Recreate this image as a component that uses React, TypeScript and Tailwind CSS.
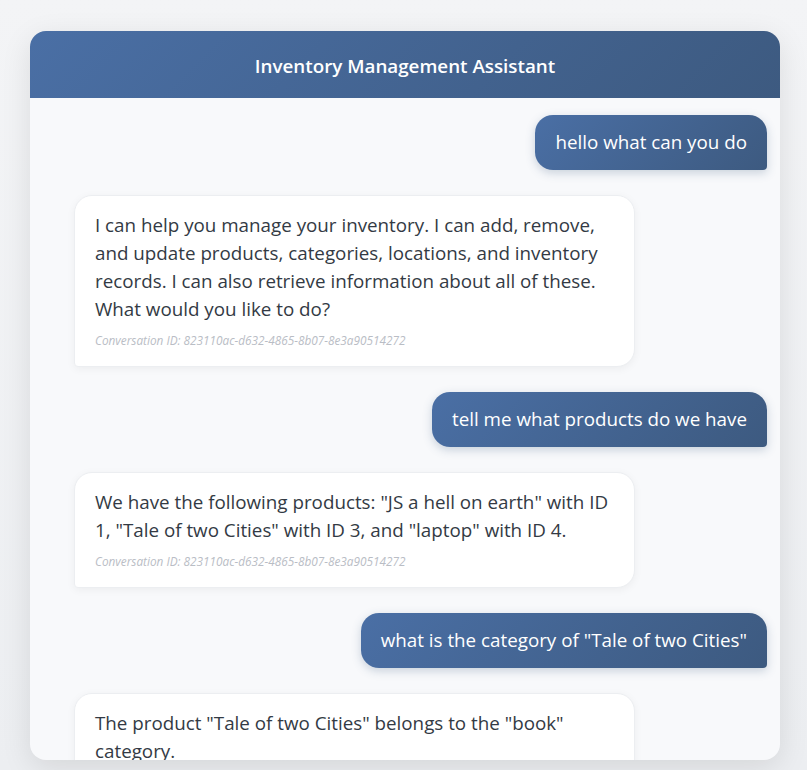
import React from 'react';

type Msg = { from: 'user' | 'bot'; text: string };

const CONV_ID = '823110ac-d632-4865-8b07-8e3a90514272';

const messages: Msg[] = [
  { from: 'user', text: 'hello what can you do' },
  {
    from: 'bot',
    text: 'I can help you manage your inventory. I can add, remove, and update products, categories, locations, and inventory records. I can also retrieve information about all of these. What would you like to do?',
  },
  { from: 'user', text: 'tell me what products do we have' },
  {
    from: 'bot',
    text: 'We have the following products: "JS a hell on earth" with ID 1, "Tale of two Cities" with ID 3, and "laptop" with ID 4.',
  },
  { from: 'user', text: 'what is the category of "Tale of two Cities"' },
  { from: 'bot', text: 'The product "Tale of two Cities" belongs to the "book" category.' },
];

function UserBubble({ text }: { text: string }) {
  return (
    <div className="flex justify-end">
      <div className="rounded-[18px] rounded-br-[4px] bg-linear-135 from-[#4a6fa5] to-[#3d5a80] px-5 pt-[13px] pb-[14px] text-[18.8px] leading-[28px] text-white shadow-[0_3px_10px_rgba(61,90,128,0.25)]">
        {text}
      </div>
    </div>
  );
}

function BotBubble({ text }: { text: string }) {
  return (
    <div className="flex justify-start">
      <div className="w-[561px] rounded-[18px] rounded-bl-[4px] border border-[#eceef1] bg-white px-5 pt-[15px] pb-[18px] text-[18.8px] leading-[28px] text-[#333a44] shadow-[0_2px_8px_rgba(0,0,0,0.05)]">
        <p>{text}</p>
        <p className="mt-[9px] text-[11.8px] leading-[16px] italic text-[#b9bdc5]">Conversation ID: {CONV_ID}</p>
      </div>
    </div>
  );
}

export default function App() {
  return (
    <div
      className="min-h-[770px] bg-gradient-to-b from-[#f3f4f6] to-[#eceef1] pt-[31px] px-[30px]"
      style={{ fontFamily: '"Open Sans", "Noto Sans", sans-serif' }}
    >
      <div className="flex h-[729px] w-[750px] flex-col overflow-hidden rounded-[16px] bg-[#f8f9fb] shadow-[0_8px_30px_rgba(0,0,0,0.10)]">
        <div className="flex h-[67px] shrink-0 items-center justify-center bg-linear-135 from-[#4a6fa5] to-[#3d5a80] pt-[3px]">
          <h1 className="text-[18.8px] font-semibold text-white">Inventory Management Assistant</h1>
        </div>
        <div className="flex flex-1 flex-col gap-[25px] overflow-hidden pt-[17px] pl-[44px] pr-[13px]">
          {messages.map((m, i) =>
            m.from === 'user' ? <UserBubble key={i} text={m.text} /> : <BotBubble key={i} text={m.text} />
          )}
        </div>
      </div>
    </div>
  );
}
